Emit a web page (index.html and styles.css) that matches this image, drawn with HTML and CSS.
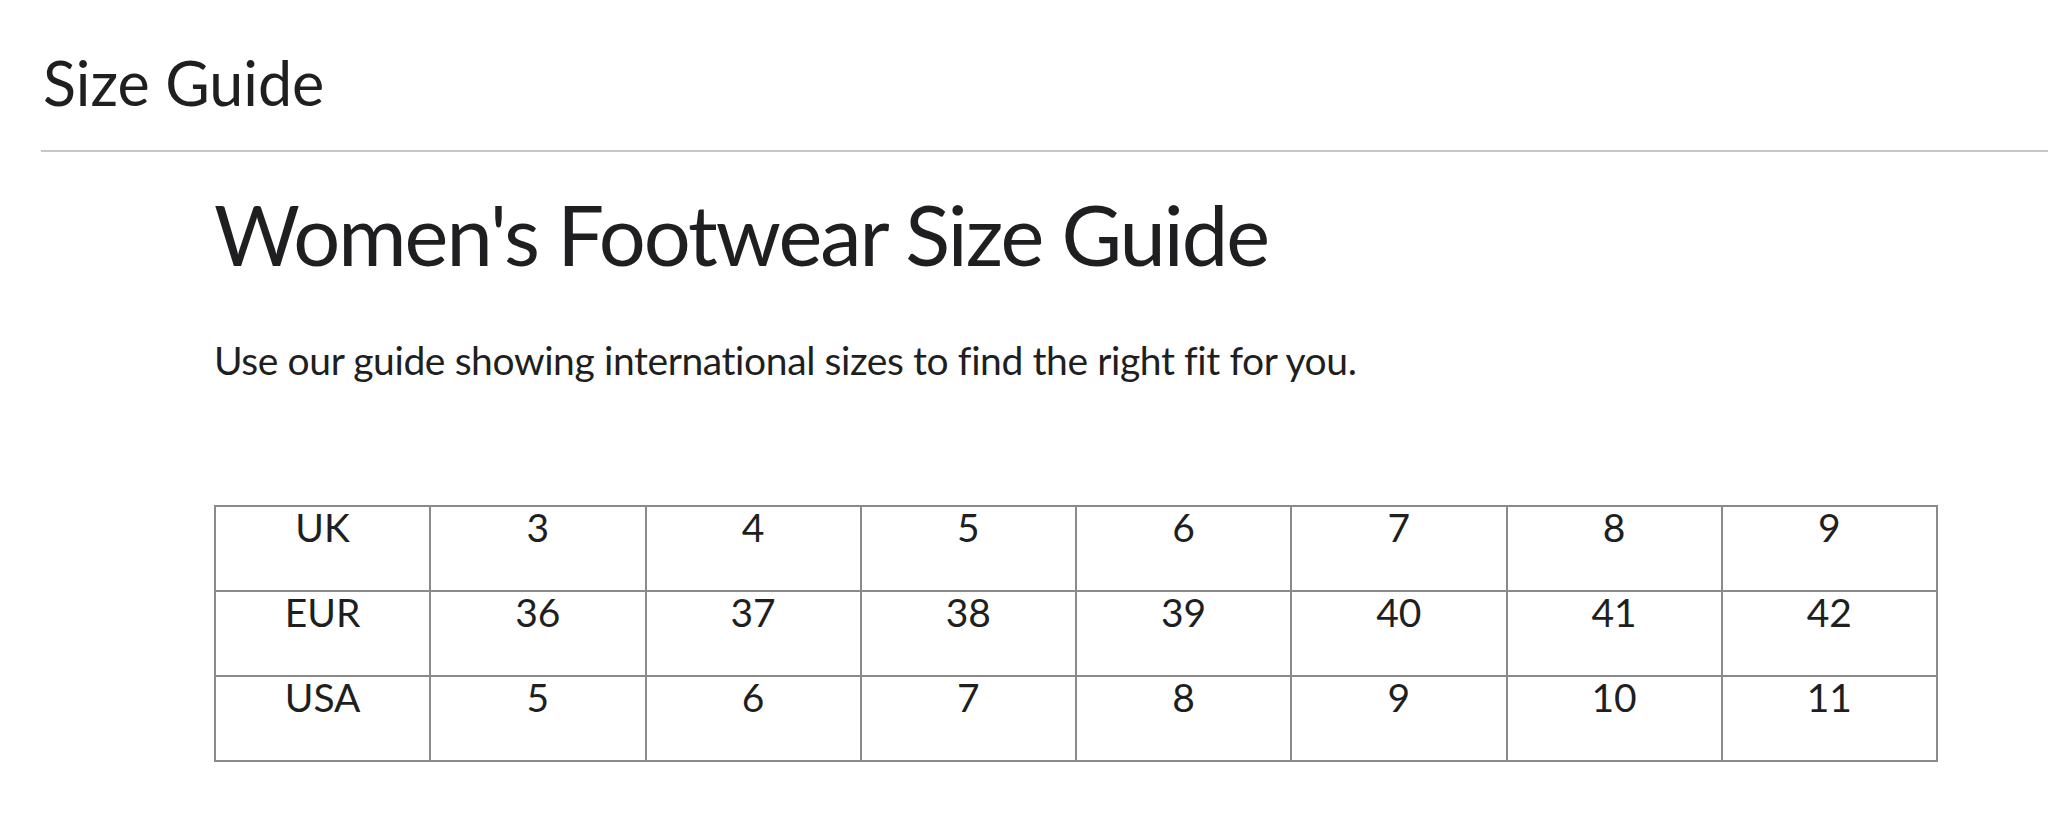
FILE: index.html
```html
<!DOCTYPE html>
<html lang="en">
<head>
    <meta charset="UTF-8">
    <meta name="viewport" content="width=device-width, initial-scale=1.0">
    <title>Size Guide</title>
    <link rel="stylesheet" href="styles.css">
</head>
<body>
    <div class="page">
        <div class="page-header">
            <h1 class="page-title">Size Guide</h1>
        </div>

        <div class="guide">
            <h2 class="guide-title">Women's Footwear Size Guide</h2>
            <p class="guide-intro">Use our guide showing international sizes to find the right fit for you.</p>

            <table class="size-table">
                <tr>
                    <td>UK</td>
                    <td>3</td>
                    <td>4</td>
                    <td>5</td>
                    <td>6</td>
                    <td>7</td>
                    <td>8</td>
                    <td>9</td>
                </tr>
                <tr>
                    <td>EUR</td>
                    <td>36</td>
                    <td>37</td>
                    <td>38</td>
                    <td>39</td>
                    <td>40</td>
                    <td>41</td>
                    <td>42</td>
                </tr>
                <tr>
                    <td>USA</td>
                    <td>5</td>
                    <td>6</td>
                    <td>7</td>
                    <td>8</td>
                    <td>9</td>
                    <td>10</td>
                    <td>11</td>
                </tr>
            </table>
        </div>
    </div>
</body>
</html>
```

FILE: styles.css
```css
body {
    font-family: Lato, "Open Sans", sans-serif;
    background: #fff;
    color: #1f1f22;
    margin: 0;
}

.page {
    padding-left: 41px;
}

.page-header {
    padding-top: 46px;
    padding-left: 2px;
    padding-bottom: 31px;
    border-bottom: 2px solid #c6c6c6;
}

.page-title {
    font-size: 61px;
    font-weight: 400;
    line-height: 1.2;
    margin: 0;
}

.guide {
    padding-left: 173px;
    padding-top: 33px;
}

.guide-title {
    font-size: 83px;
    font-weight: 400;
    line-height: 1.2;
    letter-spacing: -2px;
    margin: 0 0 52px;
}

.guide-intro {
    font-size: 39px;
    line-height: 1.2;
    letter-spacing: -0.4px;
    margin: 0 0 121px;
}

.size-table {
    width: 1724px;
    border-collapse: collapse;
    border: 2px solid #2b2b2b;
    table-layout: fixed;
}

.size-table td {
    height: 83px;
    padding: 0;
    border: 2px solid #8a8a8a;
    font-size: 39px;
    line-height: 1.05;
    text-align: center;
    vertical-align: top;
}
```
